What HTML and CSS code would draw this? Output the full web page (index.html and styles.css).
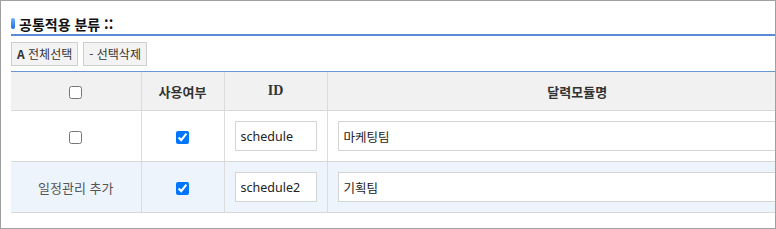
FILE: index.html
```html
<!DOCTYPE html>
<html lang="ko">
<head>
<meta charset="utf-8">
<link rel="stylesheet" href="styles.css">
</head>
<body>
<div class="frame">
  <h2 class="title"><span class="pill"></span>공통적용 분류 ::</h2>
  <div class="toolbar">
    <button class="btn"><b>A</b> 전체선택</button>
    <button class="btn">- 선택삭제</button>
  </div>
  <table class="grid">
    <colgroup>
      <col class="c1"><col class="c2"><col class="c3"><col class="c4">
    </colgroup>
    <thead>
      <tr>
        <th><input type="checkbox"></th>
        <th>사용여부</th>
        <th class="latin">ID</th>
        <th>달력모듈명</th>
      </tr>
    </thead>
    <tbody>
      <tr>
        <td><input type="checkbox"></td>
        <td><input type="checkbox" checked></td>
        <td><input class="field" type="text" value="schedule"></td>
        <td><input class="field wide" type="text" value="마케팅팀"></td>
      </tr>
      <tr class="alt">
        <td class="label">일정관리 추가</td>
        <td><input type="checkbox" checked></td>
        <td><input class="field" type="text" value="schedule2"></td>
        <td><input class="field wide" type="text" value="기획팀"></td>
      </tr>
    </tbody>
  </table>
</div>
</body>
</html>
```
FILE: styles.css
```css
html, body {
  margin: 0;
  padding: 0;
  background: #fff;
}
.frame {
  box-sizing: border-box;
  width: 776px;
  height: 229px;
  border: 1px solid #a0a0a0;
  padding: 0 0 0 10px;
  overflow: hidden;
  font-family: "Noto Sans", "Noto Sans CJK KR", sans-serif;
  color: #333;
}
.title {
  margin: 12px 0 0 0;
  height: 21px;
  border-bottom: 2px solid #5b8ad6;
  font-size: 14px;
  font-weight: bold;
  line-height: 20px;
  color: #111;
  display: flex;
  align-items: center;
  gap: 4px;
  font-family: "Noto Sans CJK KR", sans-serif;
}
.pill {
  display: inline-block;
  width: 4px;
  height: 11px;
  border-radius: 2px;
  background: linear-gradient(#6fb0ff, #1f6fe0);
}
.toolbar {
  display: flex;
  gap: 5px;
  padding: 6px 0 5px 0;
  border-bottom: 1px solid #6a94d4;
}
.btn {
  height: 24px;
  padding: 0 5px;
  border: 1px solid #cfcfcf;
  background: #f3f3f3;
  font-family: "Noto Sans CJK KR", sans-serif;
  font-size: 12px;
  color: #333;
  line-height: 22px;
  margin: 0;
}
.btn b { font-weight: bold; }
.grid {
  border-collapse: collapse;
  table-layout: fixed;
  width: 816px;
}
.c1 { width: 130px; }
.c2 { width: 83px; }
.c3 { width: 103px; }
.c4 { width: 500px; }
.grid th {
  height: 38px;
  padding: 0;
  background: #f1f1f1;
  border-bottom: 1px solid #d8d8d8;
  border-left: 1px solid #dcdcdc;
  font-size: 13px;
  font-weight: bold;
  color: #333;
  font-family: "Noto Sans CJK KR", sans-serif;
}
.grid th.latin {
  font-family: "Liberation Serif", serif;
  font-size: 14px;
}
.grid th:first-child, .grid td:first-child { border-left: none; }
.grid td {
  height: 30px;
  padding: 10px;
  text-align: center;
  border-bottom: 1px solid #d8d8d8;
  border-left: 1px solid #dcdcdc;
  font-size: 13px;
  color: #555;
}
.grid tr.alt td { background: #eef4fb; }
.grid input[type=checkbox] {
  margin: 0;
  width: 13px;
  height: 13px;
  vertical-align: middle;
}
.field {
  box-sizing: border-box;
  display: block;
  width: 100%;
  height: 30px;
  margin: 0;
  padding: 0 5px;
  border: 1px solid #d4d4d4;
  background: #fff;
  font-family: "Noto Sans", "Noto Sans CJK KR", sans-serif;
  font-size: 12.5px;
  color: #222;
}
.label {
  font-family: "Noto Sans CJK KR", sans-serif;
}
```
